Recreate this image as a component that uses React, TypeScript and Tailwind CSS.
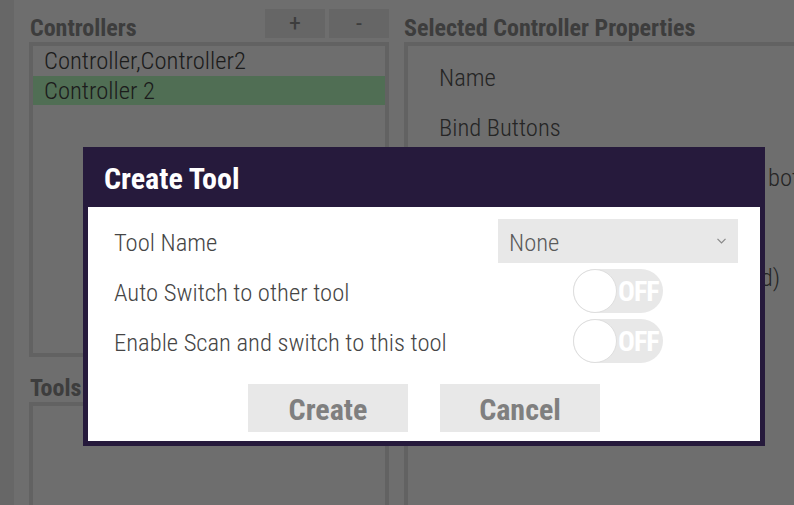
import React from 'react';

const font = { fontFamily: '"Roboto Condensed", Roboto, "Liberation Sans", sans-serif' };

function Toggle() {
  return (
    <div className="relative w-[90px] h-[44px] rounded-full bg-[#e8e8e8]">
      <div className="absolute left-0 top-0 w-[44px] h-[44px] rounded-full bg-white border border-[#dedede]" />
      <span className="absolute left-[45px] top-0 h-[44px] leading-[46px] text-[28px] font-bold text-white tracking-[-1px]">
        OFF
      </span>
    </div>
  );
}

function CreateToolDialog() {
  return (
    <div className="absolute left-[83px] top-[147px] w-[682px] h-[299px] bg-[#261a3c] px-[5px] pb-[5px] flex flex-col">
      <div className="h-[60px] pt-[14px] pl-[16px]">
        <h2 className="text-[30px] leading-[35px] font-bold text-white">Create Tool</h2>
      </div>
      <div className="flex-1 bg-white pt-[12px] pl-[26px] pr-[22px] flex flex-col">
        <div className="grid grid-cols-[1fr_240px] gap-y-[6px] text-[24.6px] font-light text-[#454545]">
          <div className="h-[44px] flex items-center pt-[4px]">Tool Name</div>
          <div className="h-[44px] bg-[#e8e8e8] flex items-center justify-between pl-[11px] pr-[12px] text-[#5a5a5a]">
            <span className="pt-[4px]">None</span>
            <svg width="9" height="6" viewBox="0 0 9 6" fill="none" stroke="#888" strokeWidth="1.2">
              <polyline points="0.5,0.8 4.5,4.8 8.5,0.8" />
            </svg>
          </div>
          <div className="h-[44px] flex items-center pt-[4px]">Auto Switch to other tool</div>
          <div className="h-[44px] flex items-center justify-center">
            <Toggle />
          </div>
          <div className="h-[44px] flex items-center pt-[4px]">Enable Scan and switch to this tool</div>
          <div className="h-[44px] flex items-center justify-center">
            <Toggle />
          </div>
        </div>
        <div className="mt-[21px] flex justify-center gap-[32px] pr-[4px]">
          <button className="w-[160px] h-[48px] bg-[#e8e8e8] text-[30px] font-bold text-[#7f7f7f] pt-[2px]">Create</button>
          <button className="w-[160px] h-[48px] bg-[#e8e8e8] text-[30px] font-bold text-[#7f7f7f] pt-[2px]">Cancel</button>
        </div>
      </div>
    </div>
  );
}

export default function App() {
  return (
    <div style={font} className="relative w-[794px] h-[505px] overflow-hidden bg-[#dcdcdc] flex">
      <div className="w-[14px] shrink-0 bg-[#cecece]" />

      {/* controllers + tools */}
      <div className="ml-[15px] w-[360px] shrink-0 flex flex-col">
        <div className="h-[42px] pt-[9px] flex items-start">
          <h3 className="mt-[5px] ml-[1px] text-[24px] leading-[28px] font-bold text-[#7a7a7a]">Controllers</h3>
          <div className="ml-auto flex gap-[4px]">
            <button className="w-[60px] h-[29px] bg-[#cccccc] text-[24px] leading-[29px] text-[#7a7a7a]">+</button>
            <button className="w-[60px] h-[29px] bg-[#cccccc] text-[24px] leading-[29px] text-[#7a7a7a]">-</button>
          </div>
        </div>
        <div className="h-[315px] border-4 border-[#c4c4c4] text-[24.6px] font-light text-[#383838]">
          <div className="h-[30px] leading-[30px] pl-[11px]">Controller,Controller2</div>
          <div className="h-[29px] leading-[29px] pl-[11px] bg-[#a0dca8]">Controller 2</div>
        </div>
        <h3 className="mt-[17px] ml-[1px] text-[24px] leading-[28px] font-bold text-[#7a7a7a]">Tools</h3>
        <div className="flex-1 border-4 border-b-0 border-[#c4c4c4]" />
      </div>

      {/* properties */}
      <div className="ml-[15px] flex-1 flex flex-col">
        <div className="h-[42px] pt-[14px]">
          <h3 className="text-[24px] leading-[28px] font-bold text-[#7a7a7a] whitespace-nowrap">Selected Controller Properties</h3>
        </div>
        <div className="flex-1 w-[420px] border-4 border-b-0 border-[#c4c4c4] pl-[31px] pr-[40px] pt-[7px] text-[24.6px] font-light text-[#4a4a4a] whitespace-nowrap">
          <div className="h-[50px] leading-[50px]">Name</div>
          <div className="h-[50px] leading-[50px]">Bind Buttons</div>
          <div className="h-[50px] leading-[50px] flex">
            <span className="w-[329px] shrink-0">Press Mode</span>
            <span>both</span>
          </div>
          <div className="h-[50px] leading-[50px]">Scan Button</div>
          <div className="h-[50px] leading-[50px] flex justify-between">
            <span>Vibration</span>
            <span>(Disabled)</span>
          </div>
        </div>
      </div>

      <div className="absolute inset-0 bg-black/50" />
      <CreateToolDialog />
    </div>
  );
}
